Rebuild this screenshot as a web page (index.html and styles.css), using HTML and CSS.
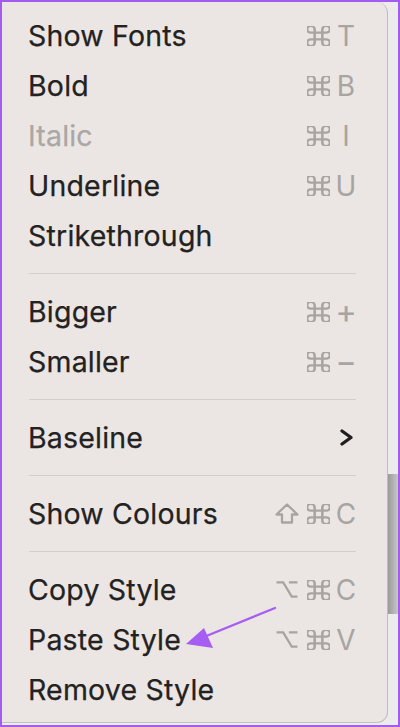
FILE: index.html
```html
<!DOCTYPE html>
<html>
<head>
<meta charset="utf-8">
<link rel="stylesheet" href="styles.css">
</head>
<body>
<div class="frame">
  <div class="menu">
    <div class="row"><span class="label">Show Fonts</span><span class="sc"><span class="mods"><svg class="cmd" viewBox="3 3 18 18" preserveAspectRatio="none"><path d="M15 6v12a3 3 0 1 0 3-3H6a3 3 0 1 0 3 3V6a3 3 0 1 0-3 3h12a3 3 0 1 0-3-3"/></svg></span><span class="key">T</span></span></div>
    <div class="row"><span class="label">Bold</span><span class="sc"><span class="mods"><svg class="cmd" viewBox="3 3 18 18" preserveAspectRatio="none"><path d="M15 6v12a3 3 0 1 0 3-3H6a3 3 0 1 0 3 3V6a3 3 0 1 0-3 3h12a3 3 0 1 0-3-3"/></svg></span><span class="key">B</span></span></div>
    <div class="row"><span class="label disabled">Italic</span><span class="sc"><span class="mods"><svg class="cmd" viewBox="3 3 18 18" preserveAspectRatio="none"><path d="M15 6v12a3 3 0 1 0 3-3H6a3 3 0 1 0 3 3V6a3 3 0 1 0-3 3h12a3 3 0 1 0-3-3"/></svg></span><span class="key">I</span></span></div>
    <div class="row"><span class="label">Underline</span><span class="sc"><span class="mods"><svg class="cmd" viewBox="3 3 18 18" preserveAspectRatio="none"><path d="M15 6v12a3 3 0 1 0 3-3H6a3 3 0 1 0 3 3V6a3 3 0 1 0-3 3h12a3 3 0 1 0-3-3"/></svg></span><span class="key">U</span></span></div>
    <div class="row"><span class="label">Strikethrough</span></div>
    <div class="sep"></div>
    <div class="row"><span class="label">Bigger</span><span class="sc"><span class="mods"><svg class="cmd" viewBox="3 3 18 18" preserveAspectRatio="none"><path d="M15 6v12a3 3 0 1 0 3-3H6a3 3 0 1 0 3 3V6a3 3 0 1 0-3 3h12a3 3 0 1 0-3-3"/></svg></span><span class="key sym">+</span></span></div>
    <div class="row"><span class="label">Smaller</span><span class="sc"><span class="mods"><svg class="cmd" viewBox="3 3 18 18" preserveAspectRatio="none"><path d="M15 6v12a3 3 0 1 0 3-3H6a3 3 0 1 0 3 3V6a3 3 0 1 0-3 3h12a3 3 0 1 0-3-3"/></svg></span><span class="key sym">−</span></span></div>
    <div class="sep"></div>
    <div class="row"><span class="label">Baseline</span><span class="sc"><span class="key"><svg class="chev" viewBox="0 0 13 17"><path d="M2 2 L11 8.5 L2 15"/></svg></span></span></div>
    <div class="sep"></div>
    <div class="row"><span class="label">Show Colours</span><span class="sc"><span class="mods"><svg class="shift" viewBox="0 0 24 21"><path d="M12 1.5 L22.5 11.5 H17 V19.5 H7 V11.5 H1.5 Z"/></svg><svg class="cmd" viewBox="3 3 18 18" preserveAspectRatio="none"><path d="M15 6v12a3 3 0 1 0 3-3H6a3 3 0 1 0 3 3V6a3 3 0 1 0-3 3h12a3 3 0 1 0-3-3"/></svg></span><span class="key">C</span></span></div>
    <div class="sep"></div>
    <div class="row"><span class="label">Copy Style</span><span class="sc"><span class="mods"><svg class="opt" viewBox="0 0 24 20"><path d="M1 2.5 H8 L17 17.5 H23 M14 2.5 H23"/></svg><svg class="cmd" viewBox="3 3 18 18" preserveAspectRatio="none"><path d="M15 6v12a3 3 0 1 0 3-3H6a3 3 0 1 0 3 3V6a3 3 0 1 0-3 3h12a3 3 0 1 0-3-3"/></svg></span><span class="key">C</span></span></div>
    <div class="row"><span class="label">Paste Style</span><span class="sc"><span class="mods"><svg class="opt" viewBox="0 0 24 20"><path d="M1 2.5 H8 L17 17.5 H23 M14 2.5 H23"/></svg><svg class="cmd" viewBox="3 3 18 18" preserveAspectRatio="none"><path d="M15 6v12a3 3 0 1 0 3-3H6a3 3 0 1 0 3 3V6a3 3 0 1 0-3 3h12a3 3 0 1 0-3-3"/></svg></span><span class="key">V</span></span></div>
    <div class="row"><span class="label">Remove Style</span></div>
    <svg class="arrow" viewBox="0 0 90 45"><path class="shaft" d="M88 4 L12 35"/><path class="head" d="M-1 40 L17 24 L26 44 Z"/></svg>
  </div>
  <div class="side"><div class="side-dark"></div></div>
</div>
</body>
</html>
```
FILE: styles.css
```css
html, body {
  margin: 0;
  padding: 0;
}
body {
  width: 400px;
  height: 727px;
  overflow: hidden;
  background: #a35cf0;
}
.frame {
  box-sizing: border-box;
  width: 400px;
  height: 727px;
  border: 2px solid #a35cf0;
  display: flex;
  background: #ececec;
  font-family: Inter, "Noto Sans", sans-serif;
}
.menu {
  position: relative;
  box-sizing: border-box;
  width: 386px;
  height: 721px;
  background: #ebe6e4;
  border-right: 1.5px solid #bfbcbb;
  border-bottom: 1.5px solid #c2bfbe;
  border-radius: 0 11px 11px 0;
  padding: 8.5px 0 0 0;
}
.row {
  height: 50px;
  display: flex;
  align-items: center;
  justify-content: space-between;
  padding: 0 30px 0 26px;
}
.label {
  font-size: 28.5px;
  color: #232221;
  letter-spacing: 0.2px;
  -webkit-text-stroke: 0.25px #232221;
}
.label.disabled {
  color: #aaa7a5;
  -webkit-text-stroke: 0.25px #aaa7a5;
}
.sc {
  display: flex;
  align-items: center;
  gap: 5px;
  color: #a7a4a2;
}
.mods {
  display: flex;
  align-items: center;
  gap: 8px;
}
.key {
  width: 22px;
  text-align: center;
  font-size: 28px;
  display: flex;
  justify-content: center;
  align-items: center;
}
.key.sym {
  font-size: 32px;
  -webkit-text-stroke: 0.2px #a7a4a2;
}
.cmd {
  width: 23px;
  height: 20px;
  fill: none;
  stroke: #a7a4a2;
  stroke-width: 2;
}
.opt {
  width: 24px;
  height: 19px;
  fill: none;
  stroke: #a7a4a2;
  stroke-width: 2.4;
}
.shift {
  width: 24px;
  height: 21px;
  fill: none;
  stroke: #a7a4a2;
  stroke-width: 2.3;
  stroke-linejoin: round;
}
.chev {
  width: 13px;
  height: 17px;
  fill: none;
  stroke: #1e1e1e;
  stroke-width: 3.2;
  stroke-linecap: round;
  stroke-linejoin: round;
}
.sep {
  height: 1.5px;
  margin: 12px 31px 12.5px 27px;
  background: #d2cecc;
}
.arrow {
  position: absolute;
  left: 185px;
  top: 602px;
  width: 90px;
  height: 45px;
  overflow: visible;
}
.arrow .shaft {
  fill: none;
  stroke: #a65ef2;
  stroke-width: 2.3;
  stroke-linecap: round;
}
.arrow .head {
  fill: #a65ef2;
}
.side {
  flex: 1;
  background: #ececec;
  padding-top: 472px;
}
.side-dark {
  height: 140px;
  background: linear-gradient(to right, #9a9a9a, #b5b5b5 60%, #c8c8c8);
}
```
